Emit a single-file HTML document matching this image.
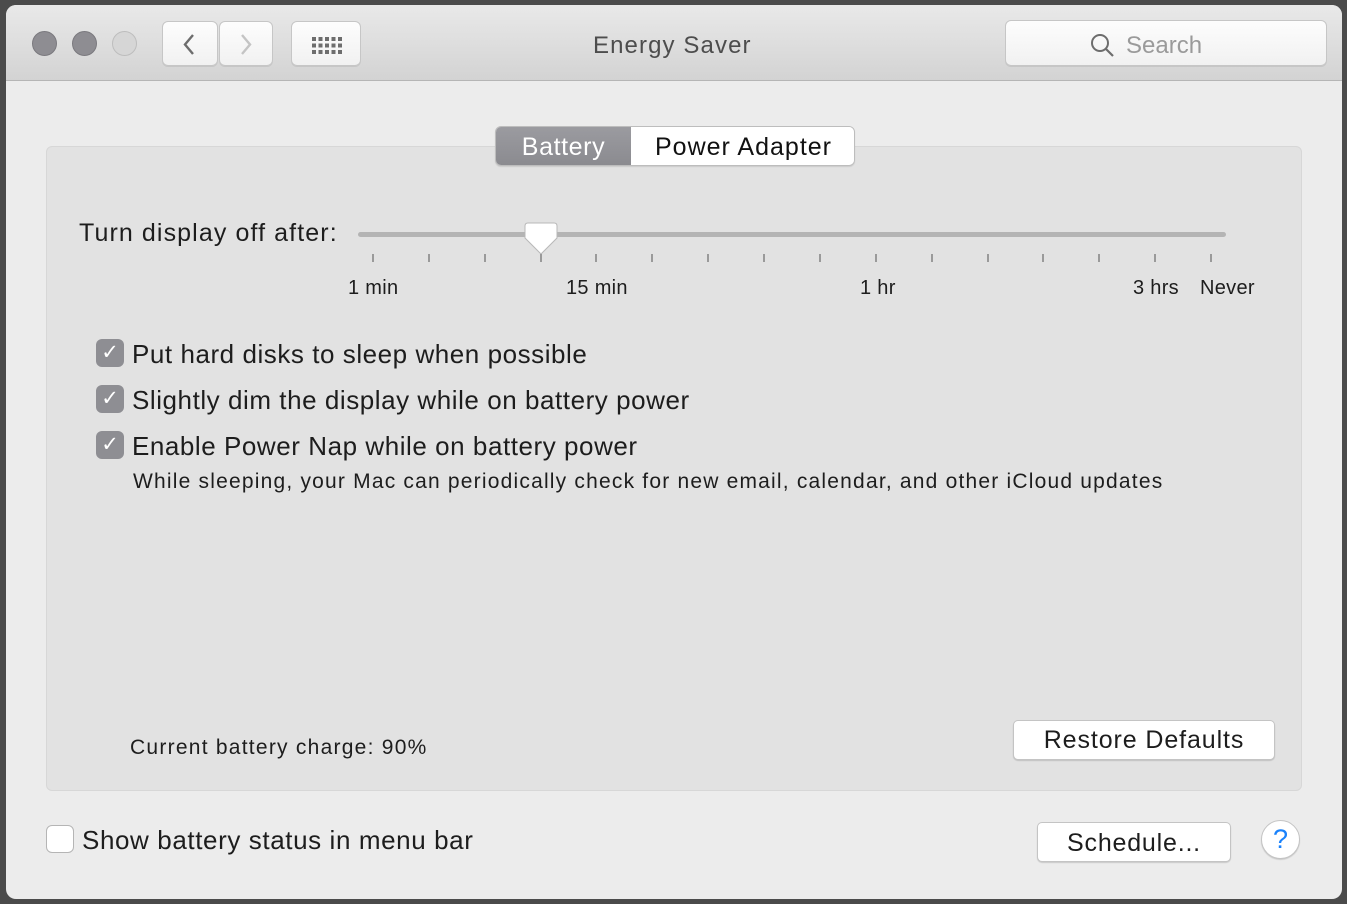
<!DOCTYPE html>
<html><head><style>
*{margin:0;padding:0;box-sizing:border-box}
body{width:1347px;height:904px;background:#4b4b4b;font-family:"Liberation Sans",sans-serif;position:relative;overflow:hidden;color:#1d1d1d}
.win{position:absolute;left:6px;top:5px;width:1336px;height:894px;background:#ececec;border-radius:10px;overflow:hidden}
.tb{position:absolute;left:0;top:0;width:100%;height:76px;background:linear-gradient(#e9e9e9,#d3d3d3);border-bottom:1px solid #b5b5b5}
.dot{position:absolute;top:26px;width:25px;height:25px;border-radius:50%}
.btn{position:absolute;background:linear-gradient(#fdfdfd,#f1f1f1);border:1px solid #c6c6c6;border-radius:6px;box-shadow:0 1px 0 rgba(0,0,0,.08)}
.abs{position:absolute;white-space:nowrap}
.group{position:absolute;left:40px;top:141px;width:1256px;height:645px;background:#e2e2e2;border:1px solid #d7d7d7;border-radius:6px}
.cb{position:absolute;width:28px;height:28px;border-radius:6px;background:#8e8e93;color:#fff;font-size:21px;text-align:center;line-height:28px}
.cl{position:absolute;white-space:nowrap;font-size:26px;letter-spacing:0.55px}
.pb{position:absolute;background:#fff;border:1px solid #c4c4c4;border-radius:5px;box-shadow:0 1px 1px rgba(0,0,0,.15);text-align:center;font-size:25px;color:#1d1d1d}
.tick{position:absolute;top:254px;width:2px;height:8px;background:#9a9a9a}
.lbl{position:absolute;top:277px;font-size:20px;white-space:nowrap;letter-spacing:0.3px}
</style></head><body>
<div class="win">
 <div class="tb">
  <div class="dot" style="left:26px;background:#8e8d92;border:1px solid #7a797e"></div>
  <div class="dot" style="left:66px;background:#8e8d92;border:1px solid #7a797e"></div>
  <div class="dot" style="left:106px;background:#d6d6d6;border:1px solid #bdbdbd"></div>
  <div class="btn" style="left:156px;top:16px;width:56px;height:45px"><svg width="56" height="45"><path d="M30 13 L22 22.5 L30 32" stroke="#6d6d6d" stroke-width="2.4" fill="none"/></svg></div>
  <div class="btn" style="left:213px;top:16px;width:54px;height:45px"><svg width="54" height="45"><path d="M22 13 L30 22.5 L22 32" stroke="#c4c4c4" stroke-width="2.4" fill="none"/></svg></div>
  <div class="btn" style="left:285px;top:16px;width:70px;height:45px"><svg width="70" height="45">
   <g fill="#6d6d6d"><rect x="20" y="15" width="4" height="4"/><rect x="26.5" y="15" width="4" height="4"/><rect x="33" y="15" width="4" height="4"/><rect x="39.5" y="15" width="4" height="4"/><rect x="46" y="15" width="4" height="4"/>
   <rect x="20" y="21.5" width="4" height="4"/><rect x="26.5" y="21.5" width="4" height="4"/><rect x="33" y="21.5" width="4" height="4"/><rect x="39.5" y="21.5" width="4" height="4"/><rect x="46" y="21.5" width="4" height="4"/>
   <rect x="20" y="28" width="4" height="4"/><rect x="26.5" y="28" width="4" height="4"/><rect x="33" y="28" width="4" height="4"/><rect x="39.5" y="28" width="4" height="4"/><rect x="46" y="28" width="4" height="4"/></g></svg></div>
  <div class="abs" style="left:587px;top:27px;font-size:24px;color:#4d4d4d;letter-spacing:1.1px">Energy Saver</div>
  <div class="btn" style="left:999px;top:15px;width:322px;height:46px;border-radius:6px">
   <svg class="abs" style="left:84px;top:12px" width="26" height="26"><circle cx="10" cy="10" r="8" stroke="#6d6d6d" stroke-width="2" fill="none"/><path d="M16 16 L23 23" stroke="#6d6d6d" stroke-width="2.2"/></svg>
   <div class="abs" style="left:120px;top:11px;font-size:24px;color:#9a9a9a">Search</div>
  </div>
 </div>
 <div class="group"></div>
 <div class="abs" style="left:489px;top:121px;width:360px;height:40px;border:1px solid #bdbdbd;border-radius:6px;overflow:hidden;box-shadow:0 1px 1px rgba(0,0,0,.1)">
  <div class="abs" style="left:0;top:0;width:135px;height:40px;background:linear-gradient(#9b9ba0,#8a8a8f);color:#fff;font-size:25px;text-align:center;line-height:40px;letter-spacing:0.6px">Battery</div>
  <div class="abs" style="left:135px;top:0;width:225px;height:40px;background:#fff;color:#111;font-size:25px;text-align:center;line-height:40px;letter-spacing:1px">Power Adapter</div>
 </div>
 <div class="abs" style="left:73px;top:214px;font-size:25px;letter-spacing:1.1px">Turn display off after:</div>
</div>
<div class="abs" style="left:358px;top:232px;width:868px;height:5px;border-radius:3px;background:#b4b4b4"></div>
<svg class="abs" style="left:523px;top:222px" width="36" height="40"><path d="M5 1 H31 Q34 1 34 4 V16 L18 32 L2 16 V4 Q2 1 5 1Z" fill="#fff" stroke="#b8b8b8" stroke-width="1"/></svg>
<div class="tick" style="left:372px"></div><div class="tick" style="left:428px"></div><div class="tick" style="left:484px"></div><div class="tick" style="left:540px"></div><div class="tick" style="left:595px"></div><div class="tick" style="left:651px"></div><div class="tick" style="left:707px"></div><div class="tick" style="left:763px"></div><div class="tick" style="left:819px"></div><div class="tick" style="left:875px"></div><div class="tick" style="left:931px"></div><div class="tick" style="left:987px"></div><div class="tick" style="left:1042px"></div><div class="tick" style="left:1098px"></div><div class="tick" style="left:1154px"></div><div class="tick" style="left:1210px"></div>
<div class="lbl" style="left:348px">1 min</div>
<div class="lbl" style="left:566px">15 min</div>
<div class="lbl" style="left:860px">1 hr</div>
<div class="lbl" style="left:1133px">3 hrs</div>
<div class="lbl" style="left:1200px">Never</div>
<div class="cb" style="left:96px;top:339px">✓</div>
<div class="cl" style="left:132px;top:339px">Put hard disks to sleep when possible</div>
<div class="cb" style="left:96px;top:385px">✓</div>
<div class="cl" style="left:132px;top:385px">Slightly dim the display while on battery power</div>
<div class="cb" style="left:96px;top:431px">✓</div>
<div class="cl" style="left:132px;top:431px">Enable Power Nap while on battery power</div>
<div class="abs" style="left:133px;top:470px;font-size:21px;letter-spacing:1.2px">While sleeping, your Mac can periodically check for new email, calendar, and other iCloud updates</div>
<div class="abs" style="left:130px;top:736px;font-size:21px;letter-spacing:1.25px">Current battery charge: 90%</div>
<div class="pb" style="left:1013px;top:720px;width:262px;height:40px;line-height:39px;letter-spacing:0.9px">Restore Defaults</div>
<div class="abs" style="left:46px;top:825px;width:28px;height:28px;border-radius:6px;background:#fff;border:1px solid #b5b5b5"></div>
<div class="cl" style="left:82px;top:825px;letter-spacing:0.6px">Show battery status in menu bar</div>
<div class="pb" style="left:1037px;top:822px;width:194px;height:40px;line-height:40px;letter-spacing:0.8px">Schedule...</div>
<div class="abs" style="left:1261px;top:820px;width:39px;height:39px;border-radius:50%;background:#fff;border:1px solid #c4c4c4;box-shadow:0 1px 1px rgba(0,0,0,.15);color:#1a82fb;font-size:27px;text-align:center;line-height:37px">?</div>
</body></html>
